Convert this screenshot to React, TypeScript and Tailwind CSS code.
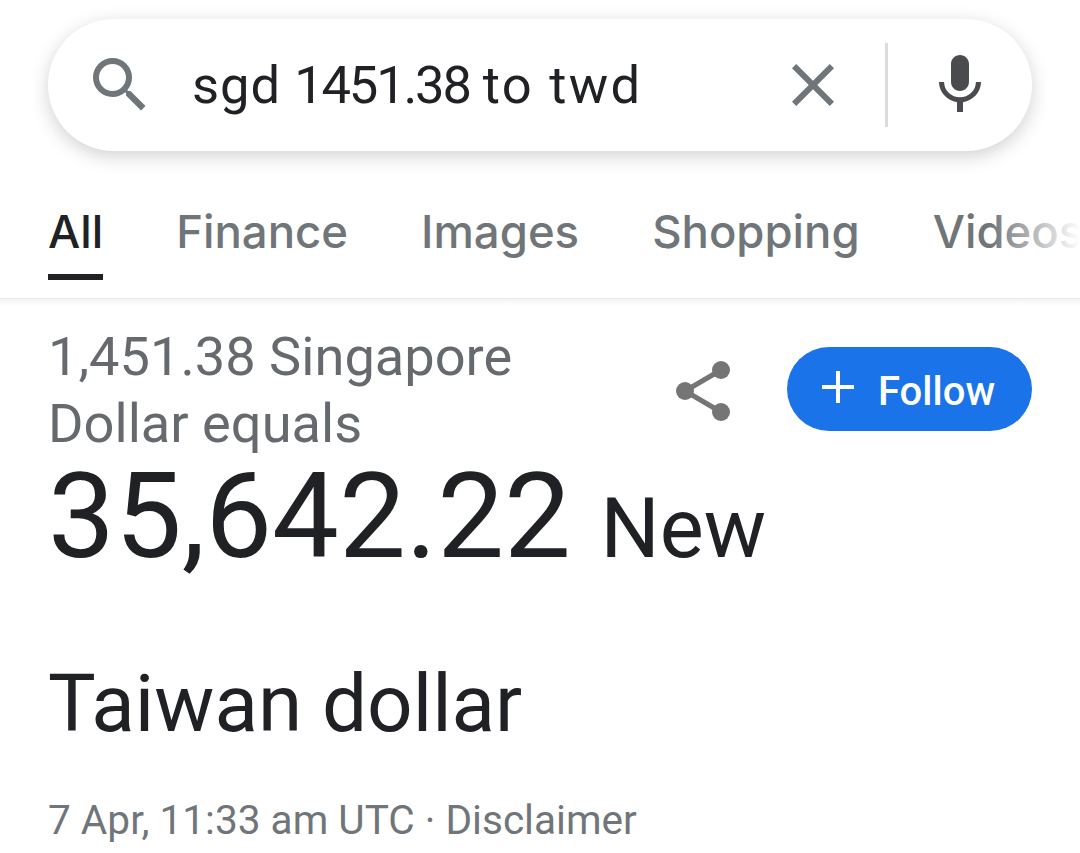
const tabs = ['All', 'Finance', 'Images', 'Shopping', 'Videos'];

function SearchIcon() {
  return (
    <svg width="72" height="72" viewBox="0 0 24 24" fill="#70757a" className="shrink-0">
      <path d="M15.5 14h-.79l-.28-.27A6.471 6.471 0 0 0 16 9.5 6.5 6.5 0 1 0 9.5 16c1.61 0 3.09-.59 4.23-1.57l.27.28v.79l5 4.99L20.49 19l-4.99-5zm-6 0C7.01 14 5 11.99 5 9.5S7.01 5 9.5 5 14 7.01 14 9.5 11.99 14 9.5 14z" />
    </svg>
  );
}

function CloseIcon() {
  return (
    <svg width="72" height="72" viewBox="0 0 24 24" fill="#70757a" className="shrink-0">
      <path d="M19 6.41L17.59 5 12 10.59 6.41 5 5 6.41 10.59 12 5 17.59 6.41 19 12 13.41 17.59 19 19 17.59 13.41 12z" />
    </svg>
  );
}

function MicIcon() {
  return (
    <svg width="72" height="72" viewBox="0 0 24 24" fill="#4a4b4e" className="shrink-0 ml-9">
      <path d="M12 14c1.66 0 2.99-1.34 2.99-3L15 5c0-1.66-1.34-3-3-3S9 3.34 9 5v6c0 1.66 1.34 3 3 3zm5.3-3c0 3-2.54 5.1-5.3 5.1S6.7 14 6.7 11H5c0 3.41 2.72 6.23 6 6.72V21h2v-3.28c3.28-.48 6-3.3 6-6.72h-1.7z" />
    </svg>
  );
}

function ShareIcon() {
  return (
    <svg width="54" height="60" viewBox="0 0 54 60" fill="#757575" className="shrink-0 mt-1">
      <path d="M45 9 L9 30 L45 51" fill="none" stroke="#757575" strokeWidth="5" />
      <circle cx="45" cy="9" r="9" />
      <circle cx="9" cy="30" r="9" />
      <circle cx="45" cy="51" r="9" />
    </svg>
  );
}

function PlusIcon() {
  return (
    <svg width="32" height="32" viewBox="0 0 32 32" stroke="white" strokeWidth="4" className="shrink-0 -mt-1">
      <path d="M16 0 V32 M0 16 H32" />
    </svg>
  );
}

export default function App() {
  return (
    <div className="w-[1080px] h-[853px] overflow-hidden bg-white font-['Roboto',sans-serif]">
      <div className="relative z-10 px-12 pt-[19px]">
        <div className="flex items-center h-[132px] rounded-[66px] bg-white shadow-[0_5px_18px_rgba(60,64,67,0.24)] pl-9 pr-9">
          <SearchIcon />
          <span className="ml-9 flex-1 text-[52.5px] text-[#202124]">
            <span className="tracking-[1px]">sgd</span>{' '}
            <span className="tracking-[-2.2px]">1451.38</span>{' '}
            <span className="tracking-[2.3px]">to twd</span>
          </span>
          <CloseIcon />
          <div className="ml-9 w-[3px] h-[84px] bg-[#dadce0]" />
          <MicIcon />
        </div>
      </div>
      <div className="relative h-[148px] overflow-hidden border-b border-[#e8eaed]">
        <div className="flex gap-[73px] pl-12 pt-[53px]">
          {tabs.map((tab, i) => (
            <div key={tab} className="shrink-0">
              <div className={`font-['Inter',sans-serif] font-medium text-[45.5px] leading-[56px] ${i === 0 ? 'text-[#202124]' : 'text-[#70757a]'}`}>{tab}</div>
              <div className={`mt-[14px] h-[6px] ${i === 0 ? 'bg-[#202124]' : ''}`} />
            </div>
          ))}
        </div>
        <div className="absolute right-0 top-0 bottom-0 w-[90px] bg-gradient-to-r from-transparent to-white" />
      </div>
      <div className="h-[7px] bg-gradient-to-b from-[#f1f3f4] to-white" />
      <div className="px-12 pt-[17px]">
        <div className="flex items-start justify-between">
          <div className="text-[54.2px] leading-[67px] text-[#666a6e] w-[520px]">1,451.38 Singapore Dollar equals</div>
          <div className="flex items-center gap-[57px] mt-[24px]">
            <ShareIcon />
            <button className="flex items-center gap-[24px] h-[84px] w-[245px] pl-[35px] rounded-[42px] bg-[#1a73e8] text-white text-[40px] font-medium">
              <PlusIcon />
              <span className="pt-[6px]">Follow</span>
            </button>
          </div>
        </div>
        <div className="mt-[5px] text-[#202124] text-[119px] leading-[110px]">
          35,642.22 <span className="text-[83px]">New</span>
        </div>
        <div className="mt-[64px] text-[#202124] text-[80px] leading-[112px]">Taiwan dollar</div>
        <div className="mt-[30px] text-[40.6px] text-[#70757a]">7 Apr, 11:33 am UTC · Disclaimer</div>
      </div>
    </div>
  );
}
